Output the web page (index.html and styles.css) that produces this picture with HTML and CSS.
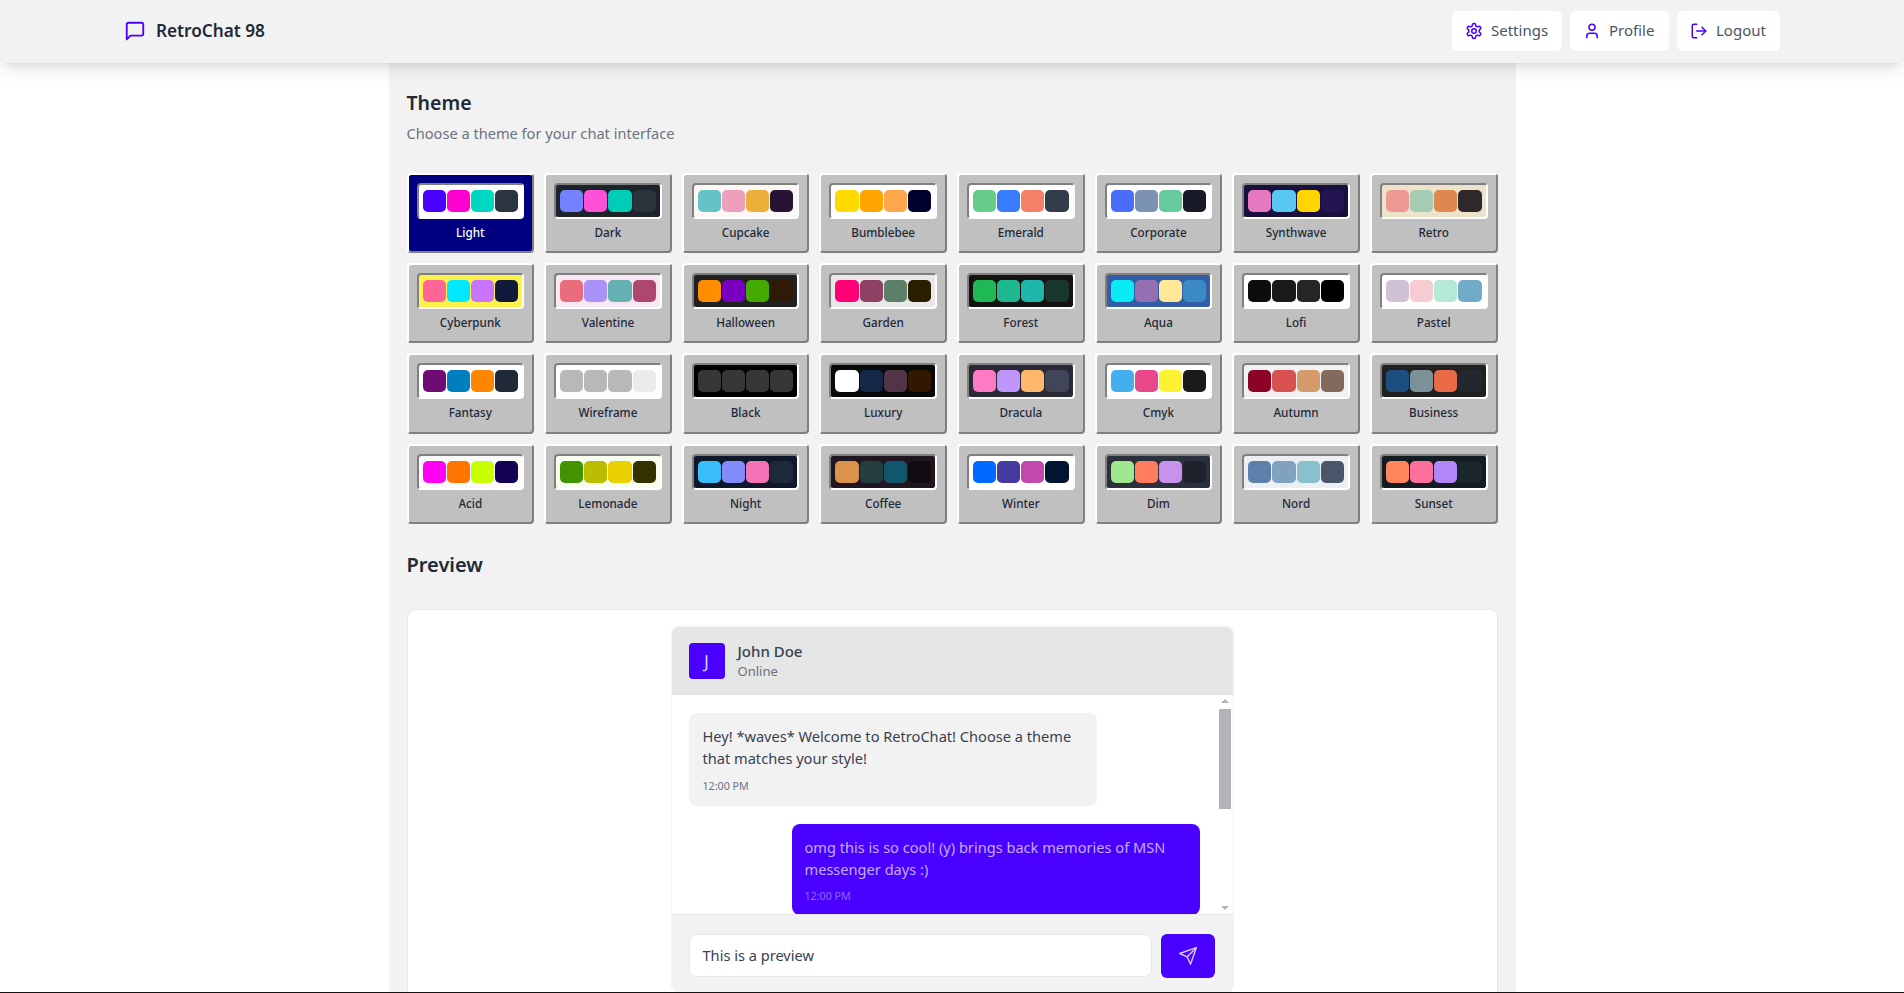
FILE: index.html
```html
<!DOCTYPE html>
<html lang="en">
<head>
    <meta charset="UTF-8">
    <title>RetroChat 98</title>
    <link rel="stylesheet" href="styles.css">
</head>
<body>
<div id="page">
    <header id="navbar">
        <a class="brand">
            <svg class="brand-icon" viewBox="0 0 24 24"><path d="M21 15a2 2 0 0 1-2 2H7l-4 4V5a2 2 0 0 1 2-2h14a2 2 0 0 1 2 2z"/></svg>
            <span>RetroChat 98</span>
        </a>
        <nav class="nav-btns">
            <a class="nav-btn nav-settings">
                <svg viewBox="0 0 24 24"><path d="M12.22 2h-.44a2 2 0 0 0-2 2v.18a2 2 0 0 1-1 1.73l-.43.25a2 2 0 0 1-2 0l-.15-.08a2 2 0 0 0-2.73.73l-.22.38a2 2 0 0 0 .73 2.73l.15.1a2 2 0 0 1 1 1.72v.51a2 2 0 0 1-1 1.74l-.15.09a2 2 0 0 0-.73 2.73l.22.38a2 2 0 0 0 2.73.73l.15-.08a2 2 0 0 1 2 0l.43.25a2 2 0 0 1 1 1.73V20a2 2 0 0 0 2 2h.44a2 2 0 0 0 2-2v-.18a2 2 0 0 1 1-1.73l.43-.25a2 2 0 0 1 2 0l.15.08a2 2 0 0 0 2.73-.73l.22-.39a2 2 0 0 0-.73-2.73l-.15-.08a2 2 0 0 1-1-1.74v-.5a2 2 0 0 1 1-1.74l.15-.09a2 2 0 0 0 .73-2.73l-.22-.38a2 2 0 0 0-2.73-.73l-.15.08a2 2 0 0 1-2 0l-.43-.25a2 2 0 0 1-1-1.73V4a2 2 0 0 0-2-2z"/><circle cx="12" cy="12" r="3"/></svg>
                <span>Settings</span>
            </a>
            <a class="nav-btn nav-profile">
                <svg viewBox="0 0 24 24"><path d="M19 21v-2a4 4 0 0 0-4-4H9a4 4 0 0 0-4 4v2"/><circle cx="12" cy="7" r="4"/></svg>
                <span>Profile</span>
            </a>
            <a class="nav-btn nav-logout">
                <svg viewBox="0 0 24 24"><path d="M9 21H5a2 2 0 0 1-2-2V5a2 2 0 0 1 2-2h4"/><polyline points="16 17 21 12 16 7"/><line x1="21" y1="12" x2="9" y2="12"/></svg>
                <span>Logout</span>
            </a>
        </nav>
    </header>

    <main id="content">
        <h2 class="title theme-title">Theme</h2>
        <p class="subtitle">Choose a theme for your chat interface</p>
        <div id="themes"></div>

        <h2 class="title preview-title">Preview</h2>
        <div class="preview-card">
            <div class="chat">
                <div class="chat-head">
                    <div class="avatar">J</div>
                    <div>
                        <div class="chat-name">John Doe</div>
                        <div class="chat-status">Online</div>
                    </div>
                </div>
                <div class="chat-body">
                    <div class="messages">
                        <div class="msg msg-in">
                            <p>Hey! *waves* Welcome to RetroChat! Choose a theme that matches your style!</p>
                            <time>12:00 PM</time>
                        </div>
                        <div class="msg msg-out">
                            <p>omg this is so cool! (y) brings back memories of MSN messenger days :)</p>
                            <time>12:00 PM</time>
                        </div>
                    </div>
                    <div class="scrollbar">
                        <span class="arrow-up"></span>
                        <span class="thumb"></span>
                        <span class="arrow-down"></span>
                    </div>
                </div>
                <div class="chat-foot">
                    <div class="chat-input">This is a preview</div>
                    <button class="send-btn">
                        <svg viewBox="0 0 24 24"><path d="m22 2-7 20-4-9-9-4Z"/><path d="M22 2 11 13"/></svg>
                    </button>
                </div>
            </div>
        </div>
    </main>
</div>
<script src="themes.js"></script>
</body>
</html>
```

FILE: styles.css
```css
*{
    margin: 0;
    padding: 0;
    box-sizing: border-box;
}
html, body{
    height: 100%;
    overflow: hidden;
}
body{
    background: #fff;
    font-family: "Noto Sans", "Open Sans", sans-serif;
    color: #1f2937;
}
a{
    text-decoration: none;
}
svg{
    fill: none;
    stroke: currentColor;
    stroke-width: 2;
    stroke-linecap: round;
    stroke-linejoin: round;
}
#page{
    height: 993px;
    display: flex;
    flex-direction: column;
    overflow: hidden;
    border-bottom: 1px solid #141414;
}

/* top bar */
#navbar{
    flex: none;
    height: 62.5px;
    padding: 0 124px 0 126px;
    display: flex;
    align-items: center;
    justify-content: space-between;
    background: #f2f2f2;
    box-shadow: 0 10px 15px -3px rgba(0,0,0,.1), 0 4px 6px -4px rgba(0,0,0,.1);
    position: relative;
    z-index: 1;
}
.brand{
    display: flex;
    align-items: center;
    gap: 10px;
    font-size: 17.2px;
    font-weight: 600;
    color: #1f2937;
}
.brand span, .nav-btn span{
    padding-bottom: 2px;
}
.brand-icon{
    width: 22px;
    height: 22px;
    margin-left: -2px;
    color: #4a00ff;
}
.nav-btns{
    display: flex;
    gap: 8px;
}
.nav-btn{
    height: 40px;
    padding-left: 13px;
    display: flex;
    align-items: center;
    gap: 8px;
    background: #fff;
    border-radius: 6px;
    font-size: 15px;
    color: #4b5563;
}
.nav-settings{
    width: 110px;
}
.nav-profile{
    width: 99px;
}
.nav-logout{
    width: 103px;
}
.nav-btn svg{
    width: 18px;
    height: 18px;
    color: #4a00ff;
}

/* main column */
#content{
    flex: 1;
    width: 1127px;
    margin: 0 auto;
    padding: 0 18px;
    overflow: hidden;
    background: #f2f2f2;
}
.title{
    font-size: 20px;
    line-height: 28px;
    font-weight: 600;
    color: #1f2937;
}
.theme-title{
    margin-top: 26.5px;
    font-size: 19.5px;
}
.subtitle{
    margin-top: 6px;
    font-size: 14.6px;
    line-height: 20px;
    color: #6b7280;
}
#themes{
    margin-top: 29.6px;
    display: grid;
    grid-template-columns: repeat(8, 1fr);
    gap: 10px;
}
.theme{
    height: 80.4px;
    padding: 8px 8px 0;
    background: #c0c0c0;
    border: 2px solid;
    border-color: #fff #808080 #808080 #fff;
    border-radius: 4px;
    color: #1f2937;
    text-align: center;
}
.theme.select{
    background: #000080;
    color: #fff;
}
.well{
    height: 36px;
    padding: 5px 4px;
    display: flex;
    gap: 1px;
    border: 2px solid;
    border-color: #808080 #fff #fff #808080;
    border-radius: 4px;
}
.well span{
    flex: 1;
    border-radius: 5px;
}
.theme-name{
    margin-top: 5px;
    font-size: 11.7px;
    line-height: 16px;
    font-weight: 500;
}
.preview-title{
    margin-top: 27px;
}

/* preview */
.preview-card{
    margin-top: 30px;
    padding: 16px 0 0;
    height: 500px;
    display: flex;
    justify-content: center;
    background: #fff;
    border: 1px solid #e5e7eb;
    border-radius: 8px;
}
.chat{
    width: 563px;
    height: 367px;
    display: flex;
    flex-direction: column;
    border: 1px solid #f2f2f2;
    border-radius: 8px;
    overflow: hidden;
}
.chat-head{
    flex: none;
    height: 68px;
    padding: 0 17px;
    display: flex;
    align-items: center;
    gap: 13px;
    background: #e5e6e6;
}
.avatar{
    width: 36px;
    height: 36px;
    display: flex;
    align-items: center;
    justify-content: center;
    background: #4a00ff;
    border-radius: 4px;
    color: #d6cbff;
    font-size: 18px;
}
.chat-name{
    margin-bottom: 1px;
    font-size: 15px;
    line-height: 20px;
    font-weight: 500;
    color: #374151;
}
.chat-status{
    margin-bottom: 1px;
    font-size: 13px;
    line-height: 18px;
    color: #6b7280;
}
.chat-body{
    flex: none;
    height: 220px;
    display: flex;
    background: #fff;
    border-bottom: 1px solid #e5e7eb;
}
.messages{
    flex: 1;
    padding: 18px 18px 0 17px;
    display: flex;
    flex-direction: column;
    gap: 18px;
    overflow: hidden;
}
.msg{
    flex: none;
    width: 408px;
    border-radius: 8px;
    font-size: 14.6px;
    line-height: 22px;
}
.msg time{
    display: block;
    font-size: 10.7px;
    line-height: 16px;
}
.msg-in{
    height: 93px;
    padding: 12px 14px;
    background: #f2f2f2;
    color: #374151;
}
.msg-in time{
    margin-top: 9px;
    color: #6b7280;
}
.msg-out{
    height: 91px;
    padding: 12px 13px;
    margin-left: 103px;
    background: #4a00ff;
    color: #c2adff;
}
.msg-out time{
    margin-top: 8px;
    color: #8f66ff;
}
.scrollbar{
    flex: none;
    width: 15px;
    padding: 4px 2px 4px 1px;
    display: flex;
    flex-direction: column;
    align-items: center;
}
.thumb{
    width: 12px;
    height: 100px;
    margin-top: 6px;
    background: #b1b3b6;
}
.arrow-up, .arrow-down{
    width: 0;
    height: 0;
    border-left: 4px solid transparent;
    border-right: 4px solid transparent;
}
.arrow-up{
    border-bottom: 4px solid #b1b3b6;
}
.arrow-down{
    margin-top: auto;
    border-top: 4px solid #b1b3b6;
}
.chat-foot{
    flex: none;
    padding: 19px 18px 0 17px;
    display: flex;
    gap: 9px;
    height: 78px;
    background: #f2f2f2;
}
.chat-input{
    flex: 1;
    height: 43px;
    padding: 0 13px 2px;
    display: flex;
    align-items: center;
    background: #fff;
    border: 1px solid #e5e7eb;
    border-radius: 8px;
    font-size: 14.6px;
    color: #374151;
}
.send-btn{
    flex: none;
    width: 54px;
    height: 44px;
    display: flex;
    align-items: center;
    justify-content: center;
    background: #4a00ff;
    border: 0;
    border-radius: 6px;
    color: #d6cbff;
}
.send-btn svg{
    width: 20px;
    height: 20px;
    stroke-width: 1.7;
}
```

FILE: themes.js
```js
// name, base background, then the four swatches
var aThemes = [
    ['Light', '#ffffff', '#4a00ff', '#ff00d3', '#00d7c0', '#2b3440'],
    ['Dark', '#1d232a', '#7582ff', '#ff50d8', '#00cdb8', '#2a323c'],
    ['Cupcake', '#faf7f5', '#65c3c8', '#ef9fbc', '#eeaf3a', '#291334'],
    ['Bumblebee', '#ffffff', '#ffd900', '#ffa400', '#ffa54c', '#00002e'],
    ['Emerald', '#ffffff', '#66cc8a', '#377cfb', '#f68067', '#333c4d'],
    ['Corporate', '#ffffff', '#4b6bfb', '#7b92b2', '#67cba0', '#181a2a'],
    ['Synthwave', '#1a103d', '#e779c1', '#58c7f3', '#ffd400', '#221551'],
    ['Retro', '#ece3ca', '#ef9995', '#a4cbb4', '#dc8850', '#2e282a'],
    ['Cyberpunk', '#fff248', '#ff6596', '#00e8ff', '#c874ff', '#111a3b'],
    ['Valentine', '#fae7f4', '#e96d7b', '#a991f7', '#66b1b3', '#af4670'],
    ['Halloween', '#212121', '#ff8f00', '#7a00c0', '#42aa00', '#2f1b05'],
    ['Garden', '#e9e7e7', '#ff0075', '#8e4162', '#5c7f67', '#291e00'],
    ['Forest', '#171212', '#1eb854', '#1db88e', '#1db8ab', '#19362d'],
    ['Aqua', '#345da7', '#09ecf3', '#966fb3', '#ffe999', '#3b8ac4'],
    ['Lofi', '#ffffff', '#0d0d0d', '#1a1919', '#262626', '#000000'],
    ['Pastel', '#ffffff', '#d1c1d7', '#f6cbd1', '#b4e9d6', '#70acc7'],
    ['Fantasy', '#ffffff', '#6e0b75', '#007ebd', '#ff8600', '#1f2937'],
    ['Wireframe', '#ffffff', '#b8b8b8', '#b8b8b8', '#b8b8b8', '#ebebeb'],
    ['Black', '#000000', '#373737', '#373737', '#373737', '#373737'],
    ['Luxury', '#09090b', '#ffffff', '#152747', '#513448', '#331800'],
    ['Dracula', '#282a36', '#ff7ac6', '#bf95f9', '#ffb86b', '#414558'],
    ['Cmyk', '#ffffff', '#45aeee', '#e8488a', '#fff232', '#1a1a1a'],
    ['Autumn', '#f1f1f1', '#8c0327', '#d85251', '#d59b6a', '#826a5c'],
    ['Business', '#202020', '#1c4e80', '#7c909a', '#ea6947', '#23282e'],
    ['Acid', '#fafafa', '#ff00f4', '#ff7400', '#c8ff00', '#140152'],
    ['Lemonade', '#f8fdef', '#419400', '#bbbd00', '#ebd000', '#343300'],
    ['Night', '#0f172a', '#38bdf8', '#818cf8', '#f472b6', '#1e293b'],
    ['Coffee', '#20161f', '#db924b', '#263e3f', '#10576d', '#120c12'],
    ['Winter', '#ffffff', '#0069ff', '#463aa2', '#c148ac', '#021431'],
    ['Dim', '#2a303c', '#9fe88d', '#ff7d5c', '#c792e9', '#1c212b'],
    ['Nord', '#eceff4', '#5e81ac', '#81a1c1', '#88c0d0', '#4c566a'],
    ['Sunset', '#121c22', '#ff865b', '#fd6f9c', '#b387fa', '#1b262c']
];
var oThemes = document.getElementById('themes');

for (var i = 0; i < aThemes.length; i++) {
    var aTheme = aThemes[i];
    var oTheme = document.createElement('div');
    oTheme.className = i == 0 ? 'theme select' : 'theme';

    var oWell = document.createElement('div');
    oWell.className = 'well';
    oWell.style.background = aTheme[1];
    for (var j = 2; j < aTheme.length; j++) {
        var oSwatch = document.createElement('span');
        oSwatch.style.background = aTheme[j];
        oWell.appendChild(oSwatch);
    }
    oTheme.appendChild(oWell);

    var oName = document.createElement('div');
    oName.className = 'theme-name';
    oName.innerHTML = aTheme[0];
    oTheme.appendChild(oName);

    oThemes.appendChild(oTheme);
}
```
